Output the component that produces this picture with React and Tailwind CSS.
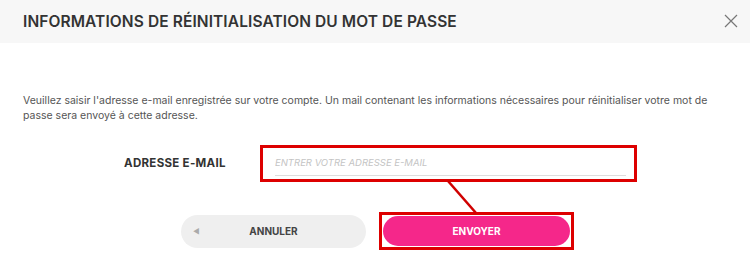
import React from 'react';

// Boîte de dialogue : réinitialisation du mot de passe (avec annotations rouges)
const App = () => {
    return (
        <div className="relative w-[750px] h-[270px] bg-white overflow-hidden" style={{ fontFamily: 'Inter, "Open Sans", sans-serif' }}>
            <div className="h-[43px] bg-[#f7f7f7] flex items-center justify-between pl-[23px] pr-[12px]">
                <h1 className="text-[15.5px] font-semibold text-[#333] uppercase tracking-[0.1px]">Informations de réinitialisation du mot de passe</h1>
                <svg width="14" height="14" viewBox="0 0 14 14" className="mt-[-2px]">
                    <path d="M1 1 L13 13 M13 1 L1 13" stroke="#777" strokeWidth="1.2" fill="none" />
                </svg>
            </div>

            <p className="mt-[50px] px-[23px] text-[10.5px] leading-[15px] text-[#555] w-[740px]">
                Veuillez saisir l'adresse e-mail enregistrée sur votre compte. Un mail contenant les informations nécessaires pour réinitialiser votre mot de passe sera envoyé à cette adresse.
            </p>

            <div className="mt-[22px] flex items-center pl-[124px]">
                <label className="w-[136px] text-[11.5px] font-bold text-[#333] tracking-[0.3px]">ADRESSE E-MAIL</label>
                <div className="w-[377px] h-[37px] border-[3px] border-[#dd0000] pl-[12px] pr-[8px]">
                    <input
                        type="email"
                        placeholder="ENTRER VOTRE ADRESSE E-MAIL"
                        className="w-full h-[25px] border-b border-[#dddddd] text-[9.5px] italic outline-none placeholder:text-[#c4c4c4] bg-transparent"
                    />
                </div>
            </div>

            <div className="mt-[30px] flex items-center pl-[181px]">
                <button type="button" className="relative w-[185px] h-[33px] rounded-full bg-[#efefef] text-[10px] font-bold text-[#444]">
                    <span className="absolute left-[12px] top-[12px] text-[7px] text-[#aaa]">◀</span>
                    ANNULER
                </button>
                <div className="ml-[13px] w-[195px] h-[38px] border-[3px] border-[#dd0000] p-[1px] flex">
                    <button type="button" className="w-full h-full rounded-full bg-[#f5278a] text-[10px] font-bold text-white">
                        ENVOYER
                    </button>
                </div>
            </div>

            <svg className="absolute left-0 top-0 pointer-events-none" width="750" height="270">
                <line x1="448" y1="181" x2="476" y2="213" stroke="#d00000" strokeWidth="2.5" />
            </svg>
        </div>
    );
};

export default App;
